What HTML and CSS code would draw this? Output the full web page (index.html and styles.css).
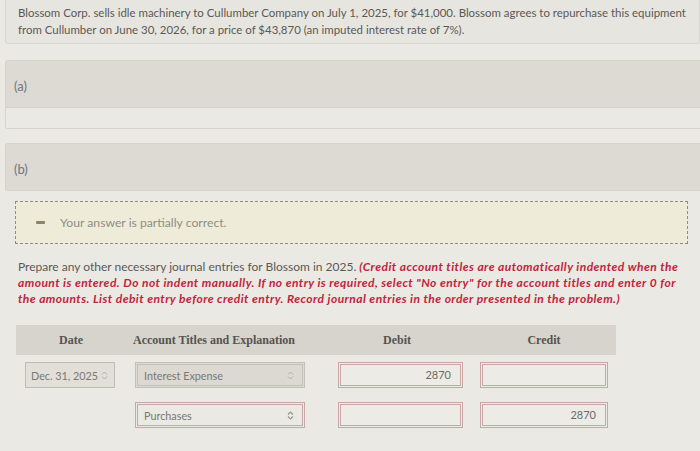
FILE: index.html
```html
<!DOCTYPE html>
<html lang="en">
<head>
    <meta charset="UTF-8">
    <meta name="viewport" content="width=device-width, initial-scale=1.0">
    <title>Journal Entry Question</title>
    <link rel="stylesheet" href="styles.css">
</head>
<body>
    <!-- Problem statement -->
    <div class="question">
        Blossom Corp. sells idle machinery to Cullumber Company on July 1, 2025, for $41,000. Blossom agrees to repurchase this equipment from Cullumber on June 30, 2026, for a price of $43,870 (an imputed interest rate of 7%).
    </div>

    <!-- Part (a) -->
    <div class="part">
        <div class="part-head">(a)</div>
        <div class="part-strip"></div>
    </div>

    <!-- Part (b) -->
    <div class="part part-b">
        <div class="part-head">(b)</div>
    </div>

    <div class="notice">
        <span class="notice-icon"></span>
        <span>Your answer is partially correct.</span>
    </div>

    <p class="instructions">
        Prepare any other necessary journal entries for Blossom in 2025. <strong>(Credit account titles are automatically indented when the amount is entered. Do not indent manually. If no entry is required, select "No entry" for the account titles and enter 0 for the amounts. List debit entry before credit entry. Record journal entries in the order presented in the problem.)</strong>
    </p>

    <div class="journal">
        <div class="journal-head">
            <div>Date</div>
            <div>Account Titles and Explanation</div>
            <div>Debit</div>
            <div>Credit</div>
        </div>

        <div class="journal-row">
            <div class="cell">
                <div class="select select-date">Dec. 31, 2025
                    <svg class="arrows" width="7" height="9" viewBox="0 0 7 9"><path d="M1 3.5 L3.5 1 L6 3.5 M1 5.5 L3.5 8 L6 5.5" fill="none" stroke="#b0aca6" stroke-width="1"/></svg>
                </div>
            </div>
            <div class="cell">
                <div class="select select-filled">Interest Expense
                    <svg class="arrows" width="7" height="9" viewBox="0 0 7 9"><path d="M1 3.5 L3.5 1 L6 3.5 M1 5.5 L3.5 8 L6 5.5" fill="none" stroke="#b0aca6" stroke-width="1"/></svg>
                </div>
            </div>
            <div class="cell"><div class="amount">2870</div></div>
            <div class="cell"><div class="amount amount-credit"></div></div>
        </div>

        <div class="journal-row">
            <div class="cell"></div>
            <div class="cell">
                <div class="select select-open">Purchases
                    <svg class="arrows" width="7" height="9" viewBox="0 0 7 9"><path d="M1 3.5 L3.5 1 L6 3.5 M1 5.5 L3.5 8 L6 5.5" fill="none" stroke="#9a958e" stroke-width="1.2"/></svg>
                </div>
            </div>
            <div class="cell"><div class="amount"></div></div>
            <div class="cell"><div class="amount amount-credit">2870</div></div>
        </div>
    </div>
</body>
</html>
```

FILE: styles.css
```css
body {
    font-family: Lato, "Open Sans", sans-serif;
    background-color: #ebe9e4;
    margin: 0;
    color: #5a5955;
    font-size: 11.45px;
    overflow: hidden;
}
.question {
    margin: -6px 0 0 5px;
    padding: 9px 8px 9px 12px;
    line-height: 17px;
    background: #e7e5e0;
    border: 1px solid #d8d6d1;
    border-radius: 3px;
    height: 30px;
}
.part {
    margin: 16px 0 0 5px;
    border: 1px solid #d6d3cd;
    border-right: none;
    border-radius: 3px 0 0 3px;
}
.part-head {
    height: 46px;
    line-height: 50px;
    padding-left: 8px;
    background: #dddad4;
    font-size: 13px;
    color: #6f7580;
}
.part-strip {
    height: 20px;
    background: #ebe9e3;
    border-top: 1px solid #d3d0ca;
}
.part-b {
    margin-top: 14px;
}
.notice {
    margin: 10px 12px 0 15px;
    height: 41px;
    display: flex;
    align-items: center;
    gap: 15px;
    padding-left: 20px;
    background: #eeecd9;
    border: 1px dashed #8f8b80;
    color: #8d8c84;
    font-size: 12.2px;
}
.notice-icon {
    width: 9px;
    height: 3px;
    background: #8e8368;
    border-radius: 1px;
}
.instructions {
    margin: 15px 12px 0 18px;
    line-height: 16px;
    font-size: 12px;
}
.instructions strong {
    color: #c0243b;
    font-style: italic;
    letter-spacing: 0.45px;
}
.journal {
    margin: 18px 0 0 16px;
    width: 600px;
}
.journal-head,
.journal-row {
    display: grid;
    grid-template-columns: 110px 196px 150px 144px;
}
.journal-head {
    height: 30px;
    background: #d7d4ce;
    font-family: "Liberation Serif", serif;
    font-weight: bold;
    font-size: 12px;
    color: #55534f;
    align-items: center;
    text-align: center;
}
.journal-head div:nth-child(2) {
    text-align: left;
    padding-left: 7px;
}
.journal-row {
    margin-top: 7px;
    height: 26px;
}
.journal-row + .journal-row {
    margin-top: 14px;
}
.cell:nth-child(1) { padding-left: 9px; }
.cell:nth-child(2) { padding-left: 9px; }
.cell:nth-child(3) { padding-left: 16px; }
.cell:nth-child(4) { padding-left: 8px; }
.select {
    height: 26px;
    box-sizing: border-box;
    display: flex;
    align-items: center;
    justify-content: space-between;
    padding: 0 8px 0 6px;
    color: #7a7872;
    font-size: 10.8px;
    white-space: nowrap;
}
.select-date {
    width: 90px;
    background: #e2dfd9;
    border: 1px solid #bfbcb5;
    padding: 0 6px 0 5px;
}
.select-filled {
    width: 170px;
    background: #dcd9d3;
    border: 3px double #c4bfb8;
}
.select-open {
    width: 170px;
    background: #ebe9e3;
    border: 3px double #c6a8a4;
}
.arrows {
    flex-shrink: 0;
}
.amount {
    width: 125px;
    height: 26px;
    box-sizing: border-box;
    border: 3px double #c8a7a4;
    background: #ecebe6;
    text-align: right;
    padding-right: 9px;
    line-height: 20px;
    color: #6c6a65;
    font-size: 11px;
}
.amount-credit {
    width: 128px;
}
```
